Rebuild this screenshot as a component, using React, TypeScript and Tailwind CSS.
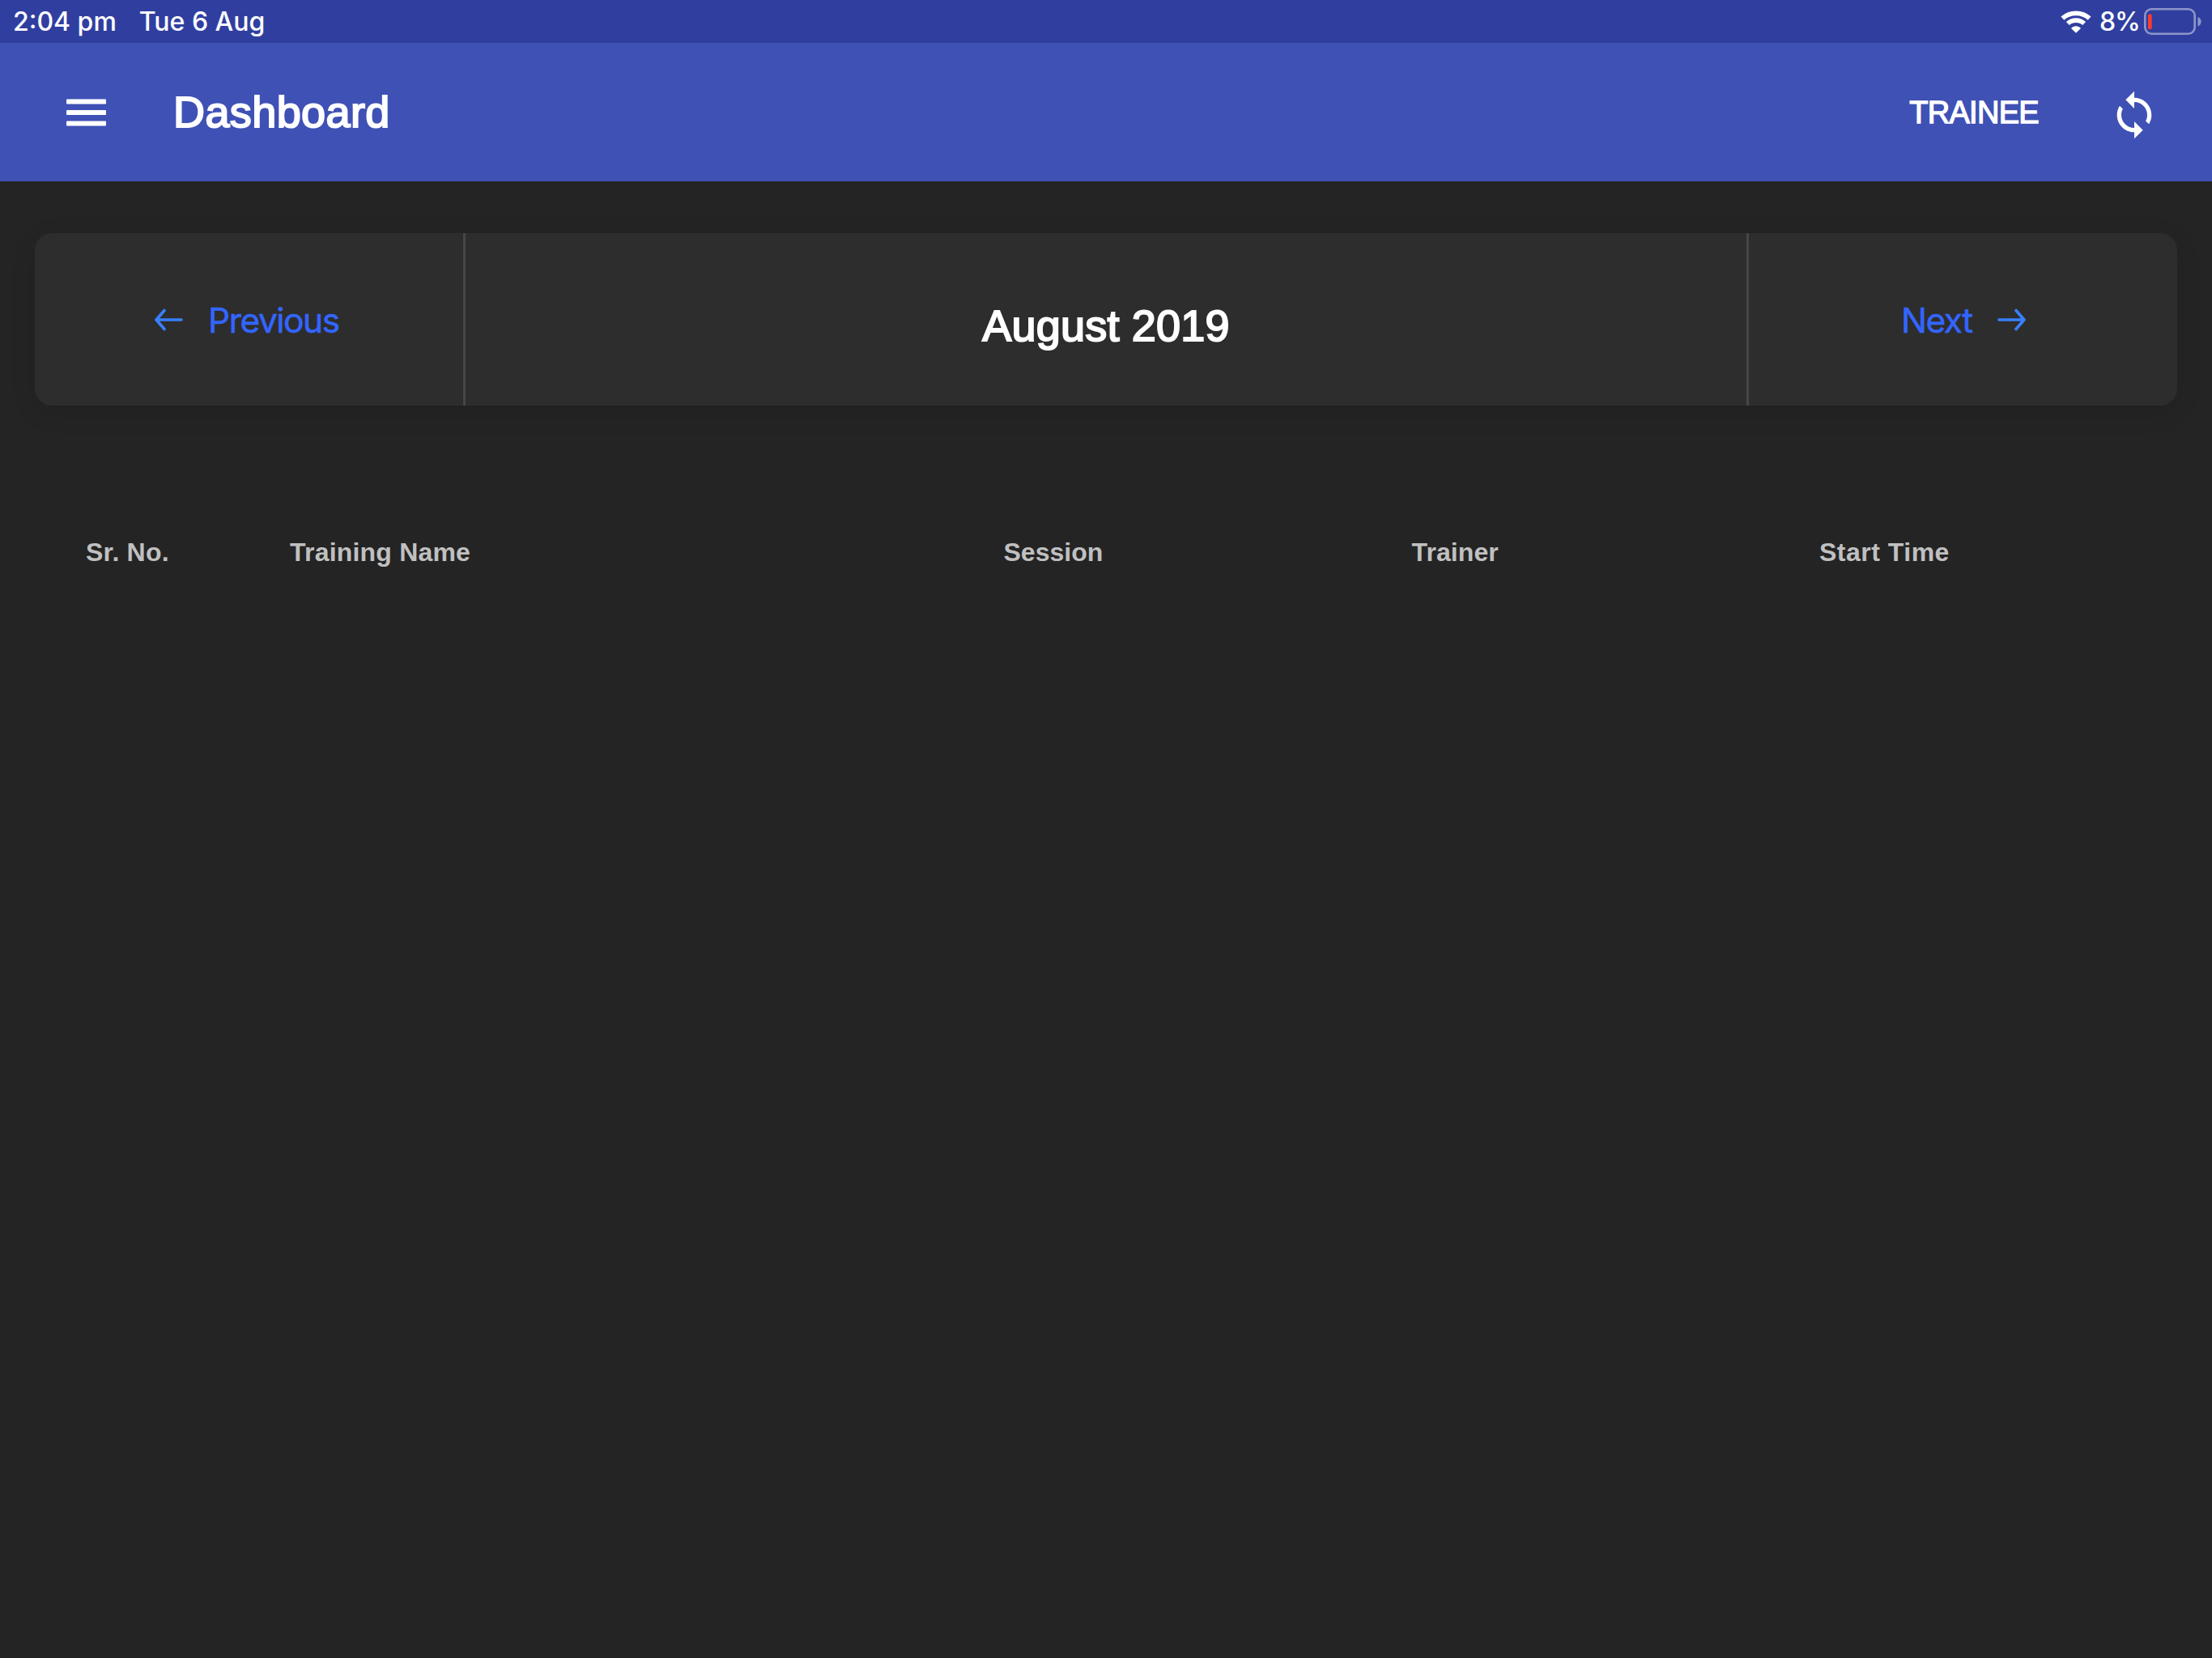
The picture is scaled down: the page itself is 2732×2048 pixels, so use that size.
import React from 'react';

const columns = [
  { label: 'Sr. No.', width: 'w-[252px] tracking-[0.2px]' },
  { label: 'Training Name', width: 'w-[881.5px] tracking-[0.2px]' },
  { label: 'Session', width: 'w-[504px]' },
  { label: 'Trainer', width: 'w-[503.5px] tracking-[0.1px]' },
  { label: 'Start Time', width: 'w-[400px] tracking-[0.5px]' },
];

function WifiIcon() {
  return (
    <svg width="38" height="28" viewBox="0 0 38 28" fill="none">
      <path d="M2.4 9.6 C11.5 1.2 26.5 1.2 35.6 9.6" stroke="white" strokeWidth="5.8" />
      <path d="M8.8 16 C14.3 10.8 23.7 10.8 29.2 16" stroke="white" strokeWidth="5.6" />
      <path d="M13 21.9 C16.4 18.4 21.6 18.4 25 21.9 L19 27.8 Z" fill="white" />
    </svg>
  );
}

function BatteryIcon() {
  return (
    <svg width="71" height="33" viewBox="0 0 71 33" fill="none">
      <rect x="1.3" y="1.3" width="61.4" height="30.4" rx="8" stroke="white" strokeOpacity="0.45" strokeWidth="2.6" />
      <rect x="5" y="7.5" width="4.6" height="18.5" rx="1.5" fill="#ff3b30" />
      <path d="M66.5 11 C72 13 72 20.5 66.5 22.5 Z" fill="white" fillOpacity="0.45" />
    </svg>
  );
}

function MenuIcon() {
  return (
    <svg width="49" height="34" viewBox="0 0 49 34" fill="white">
      <rect y="0.5" width="49" height="6" rx="0.8" />
      <rect y="14" width="49" height="6" rx="0.8" />
      <rect y="27.4" width="49" height="6" rx="0.8" />
    </svg>
  );
}

function SyncIcon() {
  return (
    <svg width="64" height="64" viewBox="0 0 24 24" fill="white">
      <path d="M12 4V1L8 5l4 4V6c3.31 0 6 2.69 6 6 0 1.01-.25 1.97-.7 2.8l1.46 1.46C19.54 15.03 20 13.57 20 12c0-4.42-3.58-8-8-8zm0 14c-3.31 0-6-2.69-6-6 0-1.01.25-1.97.7-2.8L5.24 7.74C4.46 8.97 4 10.43 4 12c0 4.42 3.58 8 8 8v3l4-4-4-4v3z" />
    </svg>
  );
}

function ArrowIcon({ className = '' }: { className?: string }) {
  return (
    <svg className={className} width="36" height="28" viewBox="0 0 36 28" fill="none" stroke="#3880ff" strokeWidth="3.6" strokeLinecap="round" strokeLinejoin="round">
      <path d="M13 2.5 L3 14 L13 25.5 M3.5 14 H34" />
    </svg>
  );
}

export default function App() {
  return (
    <div className="flex h-[2048px] w-[2732px] flex-col overflow-hidden bg-[#242424] font-['Liberation_Sans',Arial,sans-serif] text-white">
      {/* Status bar */}
      <div className="flex h-[53px] shrink-0 items-center justify-between bg-[#303f9f] pr-[13px] pl-[16px] font-['Inter',sans-serif] text-[32px] leading-none font-medium">
        <div className="flex gap-[28px]">
          <span>2:04 pm</span>
          <span>Tue 6 Aug</span>
        </div>
        <div className="flex items-center">
          <WifiIcon />
          <span className="ml-[10px] tracking-[-0.9px]">8%</span>
          <span className="ml-[5px]"><BatteryIcon /></span>
        </div>
      </div>

      {/* Toolbar */}
      <header className="flex h-[171px] shrink-0 items-center bg-[#3f51b5] pr-[64px] pl-[82px]">
        <button><MenuIcon /></button>
        <h1 className="mb-[2px] ml-[83px] text-[54px] leading-none tracking-[0.4px] [-webkit-text-stroke:2px_white]">Dashboard</h1>
        <span className="ml-auto text-[38px] leading-none tracking-[-0.7px] [-webkit-text-stroke:1.3px_white]">TRAINEE</span>
        <button className="mt-[6px] ml-[86px]"><SyncIcon /></button>
      </header>

      {/* Month switcher */}
      <section className="mx-[43px] mt-[64px] flex h-[213px] shrink-0 rounded-[21px] bg-[#2d2d2d] shadow-[0_8px_32px_rgba(0,0,0,0.1)]">
        <button className="flex w-[532px] items-center border-r-[3px] border-[#464646] pl-[147px] font-['Inter',sans-serif] text-[42.5px] leading-none tracking-[-1.5px] text-[#3366ff] [-webkit-text-stroke:0.5px_#3366ff]">
          <ArrowIcon />
          <span className="mt-[3px] ml-[31px]">Previous</span>
        </button>
        <div className="flex flex-1 items-center justify-center pt-[14px] text-[54px] leading-none tracking-[0.2px] [-webkit-text-stroke:2px_white]">
          <span>August 2019</span>
        </div>
        <button className="flex w-[532px] items-center border-l-[3px] border-[#464646] pl-[188px] font-['Inter',sans-serif] text-[42.5px] leading-none tracking-[-1.5px] text-[#3366ff] [-webkit-text-stroke:0.5px_#3366ff]">
          <span className="mt-[3px] mr-[31px]">Next</span>
          <ArrowIcon className="rotate-180" />
        </button>
      </section>

      {/* Table head */}
      <div className="mt-[160px] flex pl-[106px] text-[32px] leading-[42px] font-bold text-[#c0c0c0]">
        {columns.map((column) => (
          <div key={column.label} className={column.width}>{column.label}</div>
        ))}
      </div>
    </div>
  );
}
